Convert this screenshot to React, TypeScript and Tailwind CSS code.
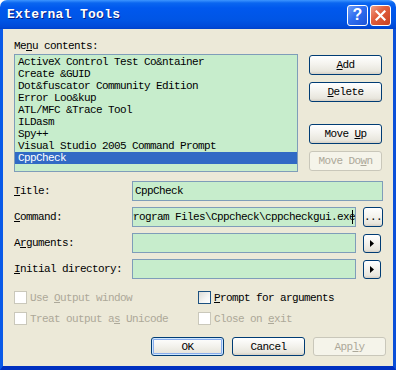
import React from 'react';

const mono = "font-['Liberation_Mono','DejaVu_Sans_Mono',monospace] text-[11px] leading-[12px] tracking-[-0.6px]";

const items = [
    'ActiveX Control Test Co&ntainer',
    'Create &GUID',
    'Dot&fuscator Community Edition',
    'Error Loo&kup',
    'ATL/MFC &Trace Tool',
    'ILDasm',
    'Spy++',
    'Visual Studio 2005 Command Prompt',
    'CppCheck',
];

type BtnProps = {
    children: React.ReactNode;
    disabled?: boolean;
    isDefault?: boolean;
    className?: string;
};

// XP Luna push button
const Btn: React.FC<BtnProps> = ({ children, disabled, isDefault, className = '' }) => {
    const base = 'flex items-center justify-center rounded-[3px] border ' + mono;
    if (disabled) {
        return (
            <div className={`${base} border-[#c9c7ba] bg-[#f5f4ea] text-[#aca899] ${className}`}>
                <span className="whitespace-pre">{children}</span>
            </div>
        );
    }
    return (
        <div
            className={`${base} border-[#003c74] bg-[linear-gradient(to_bottom,#ffffff_0%,#f4f3ee_45%,#e8e6dd_85%,#d6d0c5_100%)] text-black ${
                isDefault ? 'shadow-[inset_0_0_0_1px_#cee7ff,inset_0_0_0_2px_#89adec]' : ''
            } ${className}`}
        >
            <span className="whitespace-pre flex items-center">{children}</span>
        </div>
    );
};

const Field: React.FC<{ className?: string; children?: React.ReactNode }> = ({ className = '', children }) => (
    <div className={`h-[20px] border border-[#7f9db9] bg-[#c7edcc] overflow-hidden flex items-center ${mono} ${className}`}>
        {children}
    </div>
);

const Check: React.FC<{ label: React.ReactNode; disabled?: boolean }> = ({ label, disabled }) => (
    <div className={`flex items-center gap-[3px] ${mono} ${disabled ? 'text-[#aca899]' : 'text-black'}`}>
        <div
            className={`w-[13px] h-[13px] border ${
                disabled
                    ? 'border-[#cac8bb] bg-white'
                    : 'border-[#1c5180] bg-[linear-gradient(135deg,#dcdcd7_0%,#f5f5f3_60%,#ffffff_100%)]'
            }`}
        />
        <span className="whitespace-pre">{label}</span>
    </div>
);

const Arrow = () => (
    <svg width="4" height="7" viewBox="0 0 4 7">
        <path d="M0 0 L4 3.5 L0 7 Z" fill="#000" />
    </svg>
);

const App: React.FC = () => {
    return (
        <div className="w-[396px] h-[370px] flex flex-col bg-white">
            {/* Title bar */}
            <div className="h-[29px] shrink-0 rounded-t-[7px] bg-[linear-gradient(to_bottom,#3d95ff_0px,#0a66f0_3px,#0058ee_8px,#0055e5_20px,#0049d8_27px,#0040c8_29px)] flex items-center justify-between pl-[7px] pr-[5px]">
                <span className="font-['Liberation_Mono','DejaVu_Sans_Mono',monospace] text-[13px] font-bold tracking-[0.3px] text-white [text-shadow:1px_1px_0_#0a1e80]">
                    External Tools
                </span>
                <div className="flex items-center gap-[2px] mt-[1px]">
                    <div className="w-[21px] h-[21px] rounded-[3px] border border-white bg-[linear-gradient(135deg,#6e9cf6_0%,#2f6ef0_45%,#1c54d8_100%)] flex items-center justify-center">
                        <span className="font-['Liberation_Sans',sans-serif] text-[16px] font-bold leading-none text-white">?</span>
                    </div>
                    <div className="w-[21px] h-[21px] rounded-[3px] border border-white bg-[linear-gradient(135deg,#f0a08a_0%,#e2603f_40%,#c9401f_100%)] flex items-center justify-center">
                        <svg width="11" height="11" viewBox="0 0 11 11">
                            <path d="M1.5 1.5 L9.5 9.5 M9.5 1.5 L1.5 9.5" stroke="#fff" strokeWidth="2.2" strokeLinecap="square" />
                        </svg>
                    </div>
                </div>
            </div>

            {/* Client area */}
            <div className="flex-1 border-l-[3px] border-r-[3px] border-b-[4px] border-l-[#0a5ae8] border-r-[#0a4fd8] border-b-[#0030c0] bg-[#ece9d8] pl-[11px] pr-[10px]">
                <div className={`${mono} mt-[11px]`}>
                    Me<u>n</u>u contents:
                </div>

                <div className="flex mt-[2px] gap-[11px]">
                    {/* List box */}
                    <div className={`w-[284px] h-[118px] border border-[#7f9db9] bg-[#c7edcc] pt-[1px] ${mono}`}>
                        {items.map((it, i) => (
                            <div
                                key={it}
                                className={`h-[12px] pl-[3px] whitespace-pre ${
                                    i === items.length - 1 ? 'bg-[#316ac5] text-white' : 'text-black'
                                }`}
                            >
                                {it}
                            </div>
                        ))}
                    </div>

                    {/* Side buttons */}
                    <div className="w-[73px] flex flex-col pt-[1px]">
                        <Btn className="h-[20px]"><u>A</u>dd</Btn>
                        <Btn className="h-[20px] mt-[7px]"><u>D</u>elete</Btn>
                        <Btn className="h-[20px] mt-[22px]">Move <u>U</u>p</Btn>
                        <Btn className="h-[20px] mt-[7px]" disabled>Move Do<u>w</u>n</Btn>
                    </div>
                </div>

                {/* Fields */}
                <div className="flex flex-col mt-[9px] gap-[6px]">
                    <div className="flex items-center">
                        <div className={`w-[118px] ${mono}`}><u>T</u>itle:</div>
                        <Field className="w-[251px] pl-[2px]">CppCheck</Field>
                    </div>
                    <div className="flex items-center">
                        <div className={`w-[118px] ${mono}`}><u>C</u>ommand:</div>
                        <Field className="w-[224px] justify-end pr-[2px]">
                            <span className="whitespace-pre">C:\Program Files\Cppcheck\cppcheckgui.exe</span>
                            <span className="w-[1px] h-[14px] bg-black shrink-0 -ml-[3px]" />
                        </Field>
                        <Btn className="h-[20px] w-[20px] ml-[7px] items-end pb-[3px]">...</Btn>
                    </div>
                    <div className="flex items-center">
                        <div className={`w-[118px] ${mono}`}>A<u>r</u>guments:</div>
                        <Field className="w-[224px]" />
                        <Btn className="h-[19px] w-[18px] ml-[7px]"><Arrow /></Btn>
                    </div>
                    <div className="flex items-center">
                        <div className={`w-[118px] ${mono}`}><u>I</u>nitial directory:</div>
                        <Field className="w-[224px]" />
                        <Btn className="h-[19px] w-[18px] ml-[7px]"><Arrow /></Btn>
                    </div>
                </div>

                {/* Checkboxes */}
                <div className="grid grid-cols-[184px_1fr] gap-y-[8px] mt-[12px]">
                    <Check disabled label={<>Use <u>O</u>utput window</>} />
                    <Check label={<><u>P</u>rompt for arguments</>} />
                    <Check disabled label={<>Treat output a<u>s</u> Unicode</>} />
                    <Check disabled label={<>Close on <u>e</u>xit</>} />
                </div>

                {/* Dialog buttons */}
                <div className="flex justify-end gap-[8px] mt-[12px] mr-[-3px]">
                    <Btn isDefault className="h-[19px] w-[73px]">OK</Btn>
                    <Btn className="h-[19px] w-[73px]">Cancel</Btn>
                    <Btn disabled className="h-[19px] w-[73px]">App<u>l</u>y</Btn>
                </div>
            </div>
        </div>
    );
};

export default App;
